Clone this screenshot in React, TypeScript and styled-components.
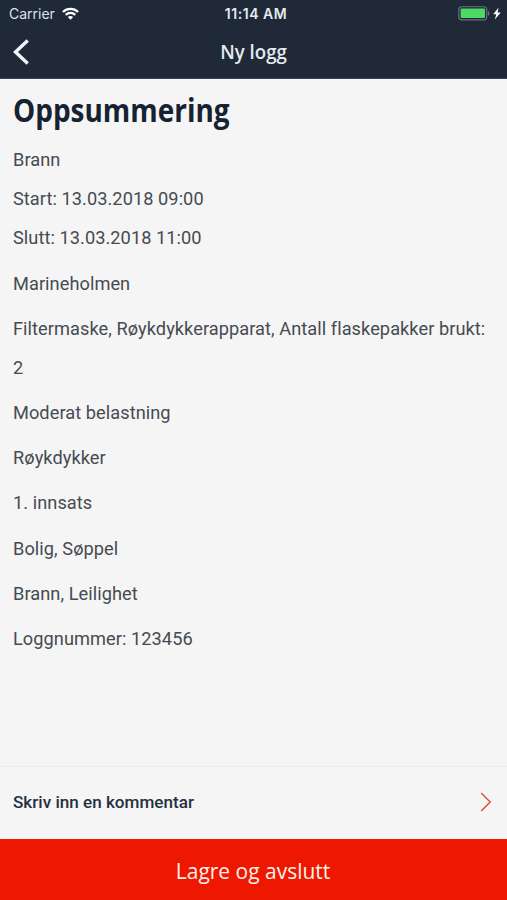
import React from 'react';
import styled, { createGlobalStyle } from 'styled-components';

const GlobalStyle = createGlobalStyle`
  * { box-sizing: border-box; }
  body { margin: 0; background: #f5f5f5; }
`;

const Screen = styled.div`
  display: flex;
  flex-direction: column;
  height: 100vh;
  overflow: hidden;
  background: #f5f5f5;
  font-family: Roboto, sans-serif;
`;

const Header = styled.header`
  flex: none;
  height: 79px;
  background: #1f2937;
  border-bottom: 1px solid #3b4552;
  color: #e4eaf2;
`;

const StatusBar = styled.div`
  display: grid;
  grid-template-columns: 1fr auto 1fr;
  align-items: center;
  height: 27px;
  padding: 0 5px 0 9px;
  font: 400 14px/27px Inter, sans-serif;
`;

const StatusGroup = styled.div<{ $end?: boolean }>`
  display: flex;
  align-items: center;
  justify-content: ${p => (p.$end ? 'flex-end' : 'flex-start')};
  gap: ${p => (p.$end ? 2 : 7)}px;
`;

const Carrier = styled.span`
  color: #dbe2ea;
`;

const Clock = styled.span`
  padding-left: 1px;
  font-size: 14px;
  font-weight: 600;
  letter-spacing: 0.55px;
`;

const NavBar = styled.nav`
  display: grid;
  grid-template-columns: 40px 1fr 40px;
  align-items: center;
  height: 51px;
`;

const BackButton = styled.button`
  display: flex;
  padding: 0 0 2px 12px;
  border: 0;
  background: none;
`;

const NavTitle = styled.div`
  text-align: center;
  font: 600 20px/50px 'Open Sans', sans-serif;
  transform: scaleX(0.93);
  padding-bottom: 2px;
`;

const Content = styled.main`
  flex: 1;
  padding: 10px 13px 0;
`;

const Heading = styled.h1`
  margin: 0 0 9px;
  color: #152331;
  font: 700 32px/42px 'Open Sans', sans-serif;
  transform: scaleX(0.873);
  transform-origin: left;
  white-space: nowrap;
`;

const Entry = styled.p`
  margin: 0 0 6.05px;
  color: #464b51;
  font-size: 18.2px;
  line-height: 39.15px;
  letter-spacing: 0.06px;
`;

const CommentRow = styled.div`
  display: flex;
  flex: none;
  align-items: center;
  justify-content: space-between;
  height: 73px;
  padding: 0 15px 2px 13px;
  border-top: 1px solid #eaebec;
  color: #263040;
  font-size: 17.1px;
  font-weight: 500;
`;

const SaveButton = styled.button`
  flex: none;
  height: 61px;
  padding: 0;
  border: 0;
  background: #ee1800;
  color: #fff0ec;
  font: 400 22px/60px 'Open Sans', sans-serif;
`;

const SaveLabel = styled.span`
  display: inline-block;
  transform: scaleX(0.953);
`;

const entries = [
  ['Brann', 'Start: 13.03.2018 09:00', 'Slutt: 13.03.2018 11:00'],
  ['Marineholmen'],
  ['Filtermaske, Røykdykkerapparat, Antall flaskepakker brukt:', '2'],
  ['Moderat belastning'],
  ['Røykdykker'],
  ['1. innsats'],
  ['Bolig, Søppel'],
  ['Brann, Leilighet'],
  ['Loggnummer: 123456'],
];

const WifiIcon = () => (
  <svg width="17" height="13" viewBox="0 0 17 13" fill="none" stroke="#fff" strokeWidth="2.3">
    <path d="M.9 5C5.2.9 11.8.9 16.1 5" />
    <path d="M3.7 7.9c2.8-2.6 6.8-2.6 9.6 0" />
    <path d="M8.5 12.7 5.8 10c1.6-1.4 3.8-1.4 5.4 0Z" fill="#fff" stroke="none" />
  </svg>
);

const BatteryIcon = () => (
  <svg width="32" height="15" viewBox="0 0 32 15">
    <rect x=".75" y=".75" width="28" height="13.2" rx="3.2" fill="none" stroke="#68727d" strokeWidth="1.2" />
    <rect x="2.6" y="2.6" width="24.4" height="9.4" rx="1.2" fill="#4cda64" />
    <path d="M30.2 5c1.6.7 1.6 4 0 4.8Z" fill="#78828c" />
  </svg>
);

const BoltIcon = () => (
  <svg width="10" height="13" viewBox="0 0 10 13">
    <path d="M6.6.4 1.2 7.2h3.1L2.8 12.6 8.8 5.4H5.6Z" fill="#fff" />
  </svg>
);

export default function App() {
  return (
    <Screen>
      <GlobalStyle />
      <Header>
        <StatusBar>
          <StatusGroup><Carrier>Carrier</Carrier><WifiIcon /></StatusGroup>
          <Clock>11:14 AM</Clock>
          <StatusGroup $end><BatteryIcon /><BoltIcon /></StatusGroup>
        </StatusBar>
        <NavBar>
          <BackButton aria-label="Tilbake">
            <svg width="18" height="26" viewBox="0 0 18 26" fill="none" stroke="#f1f4f8" strokeWidth="3.4">
              <path d="M15.7 1.5 3.5 13l12.2 11.5" />
            </svg>
          </BackButton>
          <NavTitle>Ny logg</NavTitle>
        </NavBar>
      </Header>
      <Content>
        <Heading>Oppsummering</Heading>
        {entries.map(lines => (
          <Entry key={lines[0]}>
            {lines.map((line, i) => (
              <React.Fragment key={line}>{i > 0 && <br />}{line}</React.Fragment>
            ))}
          </Entry>
        ))}
      </Content>
      <CommentRow>
        <span>Skriv inn en kommentar</span>
        <svg width="12" height="20" viewBox="0 0 12 20" fill="none" stroke="#e2493c" strokeWidth="1.4">
          <path d="m1.2 1 9 9-9 9" />
        </svg>
      </CommentRow>
      <SaveButton><SaveLabel>Lagre og avslutt</SaveLabel></SaveButton>
    </Screen>
  );
}
